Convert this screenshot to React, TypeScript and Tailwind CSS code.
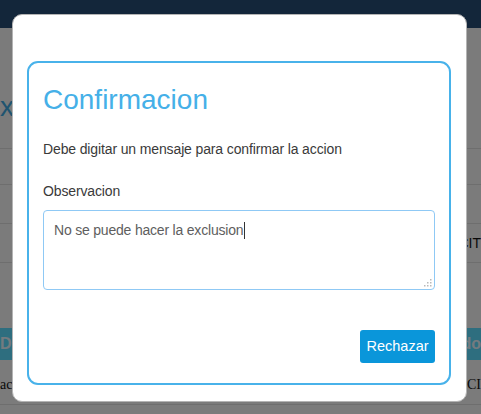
import { useState } from 'react'

const font = { fontFamily: '"Liberation Sans", Arial, sans-serif' }

function ResizeGrip() {
  // old style dotted grip in the corner of the textarea
  const dots = [
    [7, 1],
    [4, 4], [7, 4],
    [1, 7], [4, 7], [7, 7],
  ]
  return (
    <svg width="9" height="9" viewBox="0 0 9 9" className="absolute bottom-[2px] right-[2px]">
      {dots.map(([x, y], i) => (
        <rect key={i} x={x} y={y} width="1.5" height="1.5" fill="#b9b9b9" />
      ))}
    </svg>
  )
}

function Backdrop() {
  return (
    <div className="w-full h-[414px] overflow-hidden bg-[#f6f6f6]" style={font}>
      <div className="h-[28px] bg-[#264c74]" />
      <div className="h-[120px] pt-[64px]">
        <p className="text-[28px] leading-[30px] text-[#3fa9e0]">x</p>
      </div>
      <div className="border-t border-[#dcdcdc] h-[36px]" />
      <div className="border-t border-[#dcdcdc] h-[39px]" />
      <div className="border-t border-[#dcdcdc] h-[39px] flex text-[14px] text-[#111]">
        <div className="w-[467px]" />
        <span className="pt-[9px]">CIT</span>
      </div>
      <div className="border-t border-[#dcdcdc] h-[66px]" />
      <div className="h-[32px] bg-[#5cdcff] flex items-center text-[16px] font-bold text-[#e8f6ff]">
        <span className="w-[467px]">D</span>
        <span>do</span>
      </div>
      <div className="h-[44px] flex pt-[14px] text-[14px] text-[#111]" style={{ fontFamily: '"Liberation Serif", serif' }}>
        <span className="w-[467px]">ac</span>
        <span>CI</span>
      </div>
      <div className="border-t border-[#dcdcdc]" />
    </div>
  )
}

export default function App() {
  const [text] = useState('No se puede hacer la exclusion')

  return (
    <div className="relative w-[481px] h-[414px] overflow-hidden">
      <Backdrop />

      {/* overlay */}
      <div className="absolute inset-0 bg-black/50" />

      {/* modal */}
      <div
        className="absolute left-[12px] top-[14px] w-[455px] h-[388px] bg-white rounded-[10px] border border-[#b4b4b4] pt-[46px] pl-[14px] pr-[15px]"
        style={font}
      >
        <div className="border-2 border-[#48b2ea] rounded-[11px] pt-[21px] px-[14px] pb-[20px]">
          <h2 className="text-[28px] leading-[31px] text-[#45b0e8]">Confirmacion</h2>

          <p className="mt-[24px] text-[14px] leading-[20px] tracking-[-0.13px] text-[#3a3a3a]">
            Debe digitar un mensaje para confirmar la accion
          </p>

          <p className="mt-[22px] text-[14px] leading-[20px] tracking-[-0.13px] text-[#3a3a3a]">Observacion</p>

          <div className="relative mt-[9px] h-[80px] border border-[#8fc9f5] rounded-[4px] pt-[9px] px-[10px] text-[14px] leading-[20px] tracking-[-0.2px] text-[#5e5e5e]">
            {text}
            <span className="inline-block w-px h-[17px] bg-[#333] align-[-4px] ml-px" />
            <ResizeGrip />
          </div>

          <div className="flex justify-end mt-[40px]">
            <button className="h-[33px] w-[75px] bg-[#0a96da] text-white text-[14.5px] rounded-[3px]">
              Rechazar
            </button>
          </div>
        </div>
      </div>
    </div>
  )
}
